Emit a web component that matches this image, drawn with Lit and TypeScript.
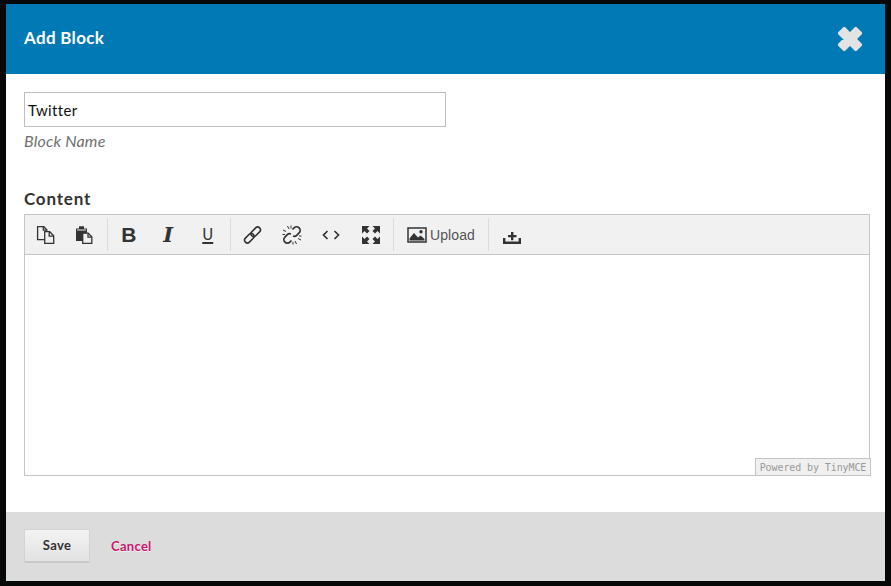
import { LitElement, html, css, svg } from 'lit';
import { customElement } from 'lit/decorators.js';

const icon = (body: unknown, size = 20) => html`<svg
  width=${size}
  height=${size}
  viewBox="0 0 20 20"
  fill="none"
  stroke="#333"
  stroke-width="1.3"
>
  ${body}
</svg>`;

const copyIcon = icon(svg`
  <path d="M2.600 1.700h6.200l3 3v10H2.600z" />
  <path d="M8.300 1.700v3.500h3.500" />
  <path d="M9.700 6.700h5l4 4v7.600h-9z" fill="#f0f0f0" />
  <path d="M14.200 6.700v4.500h4.500" />
`);

const pasteIcon = icon(svg`
  <path d="M2 3.500h3V1.300h5v2.200h3V16H2z" fill="#333" stroke="none" />
  <path d="M3 5h9" stroke="#f0f0f0" stroke-width="1" />
  <path d="M8.700 8.200h5.500l3.600 3.600v6.500H8.700z" fill="#f0f0f0" />
  <path d="M14 8.500v3.700h3.700" />
`);

const linkIcon = icon(svg`
  <g stroke-width="1.600" transform="rotate(-45 10.500 10)">
    <rect x="0.500" y="7.200" width="11" height="5.600" rx="2.800" />
    <rect x="9.500" y="7.200" width="11" height="5.600" rx="2.800" />
  </g>
`);

const unlinkIcon = icon(svg`
  <g stroke-width="1.700">
    <path d="M10.500 4.500l1.600-1.600a3.500 3.500 0 0 1 5 5l-2.400 2.400a3.400 3.400 0 0 1-3.700.7" />
    <path d="M9.500 15.500l-1.600 1.600a3.500 3.500 0 0 1-5-5l2.400-2.400a3.400 3.400 0 0 1 3.700-.7" />
  </g>
  <path d="M5.500 1l1.500 3M1 5l3 1.500M14.500 19l-1.500-3M19 15l-3-1.500M9 .5v3M.5 9.500h2.500M11 19.500V17M19.500 11H17" stroke-width="1" />
`);

const codeIcon = icon(svg`
  <path d="M6.500 6L2.500 10l4 4M13.500 6l4 4-4 4" stroke-width="1.700" />
`);

const fullscreenIcon = icon(svg`
  <g fill="#333" stroke="none">
    <path d="M1 1h7.500L6 3.500 8.500 6 6 8.500 3.500 6 1 8.500z" />
    <path d="M19 1h-7.500L14 3.500 11.500 6 14 8.500 16.500 6 19 8.500z" />
    <path d="M1 19h7.500L6 16.500 8.500 14 6 11.500 3.500 14 1 11.500z" />
    <path d="M19 19h-7.500l2.500-2.500-2.500-2.500 2.500-2.500 2.500 2.500 2.500-2.500z" />
  </g>
`);

const imageIcon = icon(svg`
  <path d="M1 3h18v14H1z" fill="#f0f0f0" stroke-width="1.500" />
  <path d="M2.500 15.500v-2l4.500-5.500 4 4.500 2.500-2 4 3.500v1.500z" fill="#333" stroke="none" />
  <circle cx="14" cy="6.800" r="1.700" fill="#333" stroke="none" />
`);

const insertIcon = icon(svg`
  <g fill="#333" stroke="none">
    <path d="M9 7h2.400v3h3.100v2.300h-3.100v3H9v-3H6V10h3z" />
    <path d="M1 13h2.400v3.600h13.200V13H19v6H1z" />
  </g>
`);

@customElement('app-root')
export class AppRoot extends LitElement {
  static styles = css`
    :host {
      display: block;
      height: 586px;
      background: #060808;
      padding: 4px 6px 5.5px;
      box-sizing: border-box;
      font-family: Lato, 'Liberation Sans', sans-serif;
      overflow: hidden;
    }

    .dialog {
      display: flex;
      flex-direction: column;
      height: 100%;
      background: #fff;
    }

    .header {
      display: flex;
      align-items: center;
      justify-content: space-between;
      height: 70px;
      flex: none;
      padding: 0 20px 0 18px;
      background: #0079b5;
      color: #fff;
    }

    .title {
      font-size: 17px;
      font-weight: 700;
      letter-spacing: 0.3px;
      margin-bottom: 4px;
    }

    .close {
      display: block;
    }

    .body {
      flex: 1;
      padding: 18px 18px 0;
    }

    .name {
      width: 422px;
      height: 35px;
      box-sizing: border-box;
      display: flex;
      align-items: center;
      padding: 0 3px;
      border: 1px solid #bdbdbd;
      font-size: 15px;
      letter-spacing: 0.35px;
      color: #111;
    }

    .hint {
      margin-top: 5px;
      font-size: 16px;
      line-height: 17px;
      font-style: italic;
      letter-spacing: 0.2px;
      color: #6f6f6f;
    }

    .label {
      margin-top: 40px;
      font-size: 17px;
      line-height: 20px;
      font-weight: 700;
      letter-spacing: 0.8px;
      color: #333;
    }

    .editor {
      position: relative;
      margin-top: 5px;
      width: 846px;
      height: 262px;
      box-sizing: border-box;
      border: 1px solid #c5c5c5;
      display: flex;
      flex-direction: column;
    }

    .toolbar {
      display: flex;
      height: 40px;
      flex: none;
      box-sizing: border-box;
      border-bottom: 1px solid #c5c5c5;
      padding: 3px 0;
      background-color: #f1f1f1;
      background-image: radial-gradient(#e2e2e2 0.6px, transparent 0.7px);
      background-size: 4px 4px;
    }

    .group {
      display: flex;
      align-items: center;
      padding: 0 2.5px 0 0;
      border-right: 1px solid #dcdcdc;
    }

    .group.follow {
      padding-left: 1.5px;
    }

    .group:last-child {
      border-right: 0;
    }

    .btn {
      width: 39.5px;
      height: 32px;
      display: flex;
      align-items: center;
      justify-content: center;
      color: #333;
    }

    .glyph {
      font-family: 'DejaVu Sans', sans-serif;
      font-size: 20px;
      line-height: 20px;
    }

    .bold {
      font-family: 'Liberation Sans', sans-serif;
      font-size: 21px;
      font-weight: 700;
    }

    .italic {
      font-family: 'DejaVu Serif', serif;
      font-size: 21px;
      font-weight: 700;
      font-style: italic;
    }

    .under {
      font-size: 15px;
      font-weight: 400;
      text-decoration: underline;
      text-underline-offset: 2px;
      text-decoration-thickness: 2px;
    }

    .upload {
      display: flex;
      align-items: center;
      gap: 3px;
      padding: 0 11px 0 13px;
      font-family: 'Liberation Sans', sans-serif;
      font-size: 14px;
      letter-spacing: 0.1px;
      color: #555;
    }

    .insert {
      margin-left: 2.5px;
    }

    .powered {
      position: absolute;
      right: -2px;
      bottom: -1px;
      width: 116px;
      height: 18px;
      box-sizing: border-box;
      border: 1px solid #c5c5c5;
      background: #f0f0f0;
      display: flex;
      align-items: center;
      justify-content: center;
      font-family: 'DejaVu Sans Mono', monospace;
      font-size: 10px;
      letter-spacing: -0.1px;
      color: #999;
      white-space: nowrap;
    }

    .footer {
      display: flex;
      align-items: center;
      height: 68.5px;
      flex: none;
      padding: 0 18px;
      background: #dcdcdc;
    }

    .save {
      width: 66px;
      height: 34px;
      box-sizing: border-box;
      display: flex;
      align-items: center;
      justify-content: center;
      padding-bottom: 1px;
      border: 1px solid #d2d2d2;
      border-bottom: 2px solid #c8c8c8;
      border-radius: 2px;
      background: linear-gradient(#f3f3f3, #e2e2e2);
      font-size: 13px;
      font-weight: 700;
      letter-spacing: 0.3px;
      color: #333;
    }

    .cancel {
      margin-left: 21px;
      margin-bottom: 1px;
      font-size: 13px;
      font-weight: 700;
      letter-spacing: 0.3px;
      color: #c9186f;
      text-shadow: 0 1px 0 #f2f2f2;
    }
  `;

  render() {
    return html`
      <div class="dialog">
        <div class="header">
          <div class="title">Add Block</div>
          <svg class="close" width="30" height="30" viewBox="0 0 26 26">
            <path
              d="M4 8l4-4 5 5 5-5 4 4-5 5 5 5-4 4-5-5-5 5-4-4 5-5z"
              fill="#e3e3e3"
              stroke="#e3e3e3"
              stroke-width="3"
              stroke-linejoin="round"
            />
          </svg>
        </div>

        <div class="body">
          <div class="name">Twitter</div>
          <div class="hint">Block Name</div>
          <div class="label">Content</div>

          <div class="editor">
            <div class="toolbar">
              <div class="group">
                <span class="btn">${copyIcon}</span>
                <span class="btn">${pasteIcon}</span>
              </div>
              <div class="group follow">
                <span class="btn glyph bold">B</span>
                <span class="btn glyph italic">I</span>
                <span class="btn glyph under">U</span>
              </div>
              <div class="group follow">
                <span class="btn">${linkIcon}</span>
                <span class="btn">${unlinkIcon}</span>
                <span class="btn">${codeIcon}</span>
                <span class="btn">${fullscreenIcon}</span>
              </div>
              <div class="group">
                <span class="upload">${imageIcon} Upload</span>
              </div>
              <div class="group">
                <span class="btn insert">${insertIcon}</span>
              </div>
            </div>
            <div class="powered">Powered by TinyMCE</div>
          </div>
        </div>

        <div class="footer">
          <div class="save">Save</div>
          <div class="cancel">Cancel</div>
        </div>
      </div>
    `;
  }
}
